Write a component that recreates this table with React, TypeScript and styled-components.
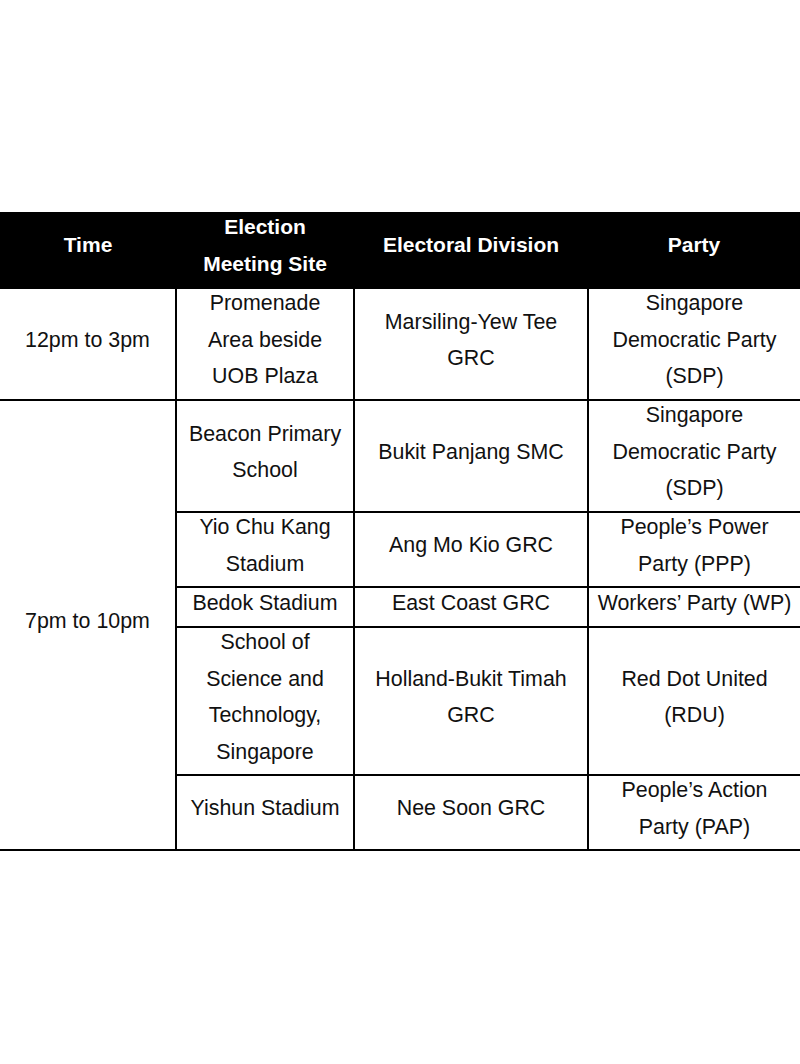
import React from "react";
import styled, { createGlobalStyle } from "styled-components";

const GlobalStyle = createGlobalStyle`
  html, body {
    margin: 0;
    padding: 0;
    background: #ffffff;
  }
  body {
    font-family: "Liberation Sans", Arial, sans-serif;
  }
`;

const Page = styled.div`
  width: 800px;
  min-height: 1064px;
  padding-top: 212px;
  box-sizing: border-box;
  background: #ffffff;
`;

const Table = styled.table`
  width: 800px;
  border-collapse: collapse;
  table-layout: fixed;
  font-family: "Liberation Sans", Arial, sans-serif;
  font-size: 21.4px;
  line-height: 36.5px;
  color: #111111;
`;

const HeadRow = styled.tr`
  background: #000000;
  height: 76px;
`;

const HeadCell = styled.th`
  padding: 0;
  color: #ffffff;
  font-weight: 700;
  font-size: 21px;
  text-align: center;
  vertical-align: middle;
  border: none;
`;

const Row = styled.tr<{ $h: number }>`
  height: ${(p) => p.$h}px;
`;

const Cell = styled.td`
  padding: 0;
  text-align: center;
  vertical-align: middle;
  border: 2px solid #000;

  &:first-child {
    border-left: none;
  }
  &:last-child {
    border-right: none;
  }
`;

const Lines = styled.div`
  margin: -4px 0 4px;
`;

const Line = styled.div`
  white-space: nowrap;
`;

type Entry = {
  site: string[];
  division: string[];
  party: string[];
  h: number;
};

const evening: Entry[] = [
  {
    site: ["Beacon Primary", "School"],
    division: ["Bukit Panjang SMC"],
    party: ["Singapore", "Democratic Party", "(SDP)"],
    h: 112,
  },
  {
    site: ["Yio Chu Kang", "Stadium"],
    division: ["Ang Mo Kio GRC"],
    party: ["People\u2019s Power", "Party (PPP)"],
    h: 75,
  },
  {
    site: ["Bedok Stadium"],
    division: ["East Coast GRC"],
    party: ["Workers\u2019 Party (WP)"],
    h: 40,
  },
  {
    site: ["School of", "Science and", "Technology,", "Singapore"],
    division: ["Holland-Bukit Timah", "GRC"],
    party: ["Red Dot United", "(RDU)"],
    h: 148,
  },
  {
    site: ["Yishun Stadium"],
    division: ["Nee Soon GRC"],
    party: ["People\u2019s Action", "Party (PAP)"],
    h: 75,
  },
];

const Text: React.FC<{ lines: string[] }> = ({ lines }) => (
  <Lines>
    {lines.map((l, i) => (
      <Line key={i}>{l}</Line>
    ))}
  </Lines>
);

export default function App() {
  return (
    <>
      <GlobalStyle />
      <Page>
        <Table>
          <colgroup>
            <col style={{ width: 176 }} />
            <col style={{ width: 178 }} />
            <col style={{ width: 234 }} />
            <col style={{ width: 212 }} />
          </colgroup>
          <thead>
            <HeadRow>
              <HeadCell>
                <Text lines={["Time"]} />
              </HeadCell>
              <HeadCell>
                <Text lines={["Election", "Meeting Site"]} />
              </HeadCell>
              <HeadCell>
                <Text lines={["Electoral Division"]} />
              </HeadCell>
              <HeadCell>
                <Text lines={["Party"]} />
              </HeadCell>
            </HeadRow>
          </thead>
          <tbody>
            <Row $h={112}>
              <Cell>
                <Text lines={["12pm to 3pm"]} />
              </Cell>
              <Cell>
                <Text lines={["Promenade", "Area beside", "UOB Plaza"]} />
              </Cell>
              <Cell>
                <Text lines={["Marsiling-Yew Tee", "GRC"]} />
              </Cell>
              <Cell>
                <Text lines={["Singapore", "Democratic Party", "(SDP)"]} />
              </Cell>
            </Row>
            {evening.map((e, i) => (
              <Row key={i} $h={e.h}>
                {i === 0 && (
                  <Cell rowSpan={evening.length}>
                    <Text lines={["7pm to 10pm"]} />
                  </Cell>
                )}
                <Cell>
                  <Text lines={e.site} />
                </Cell>
                <Cell>
                  <Text lines={e.division} />
                </Cell>
                <Cell>
                  <Text lines={e.party} />
                </Cell>
              </Row>
            ))}
          </tbody>
        </Table>
      </Page>
    </>
  );
}
